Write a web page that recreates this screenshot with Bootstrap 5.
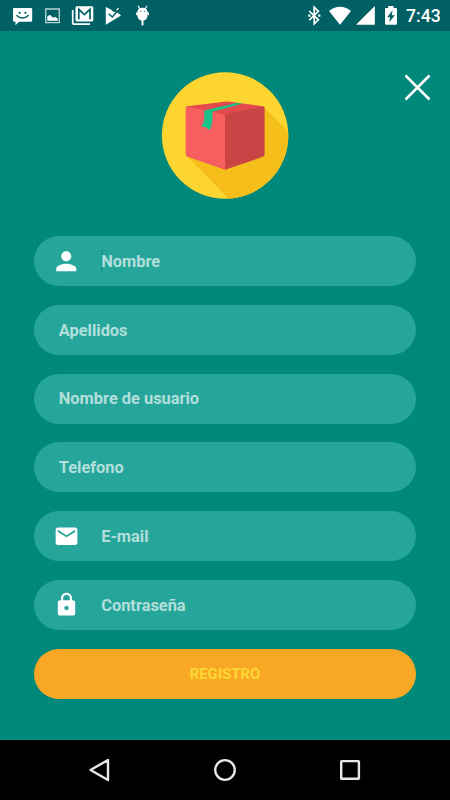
<!DOCTYPE html>
<html lang="es">
<head>
<meta charset="utf-8">
<meta name="viewport" content="width=device-width, initial-scale=1">
<title>Registro</title>
<link href="https://cdn.jsdelivr.net/npm/bootstrap@5.3.0/dist/css/bootstrap.min.css" rel="stylesheet">
<style>
body { font-family: Roboto, "Liberation Sans", sans-serif; background: #00897b; }
svg { display: block; flex: none; }
.screen { height: 800px; }
.status-bar { height: 31px; background: #006064; }
.clock { font-size: 17.6px; font-weight: 500; line-height: 31px; width: 46px; padding-left: 2px; padding-top: 1px; }
.hero { height: 205.2px; }
.logo { margin-top: 40px; }
.close-btn { position: absolute; right: 19px; top: 42px; }
.fields { padding: 0 33.8px; gap: 18.75px; }
.field { height: 50px; border-radius: 25px; background: #26a69a; padding-left: 20px; }
.field input { color: #b2dfdb; font-size: 16.4px; font-weight: 700; outline: 0; min-width: 0; padding: 2px 0 0 5px; height: 24px; }
.field input::placeholder { color: #b2dfdb; opacity: 1; }
.field svg + input { padding-left: 0; margin-left: 22.4px; }
.field .caret { background: linear-gradient(#16998b, #16998b) 0 1px / 2px 22px no-repeat; }
.field-submit { height: 50px; border-radius: 25px; background: #f9a825; color: #fdd835; font-size: 14.9px; font-weight: 700; }
.field-submit:hover { background: #f9a825; color: #fdd835; }
.nav-keys { height: 60px; background: #000; padding: 0 37.500px; }
</style>
<script src="https://cdn.jsdelivr.net/npm/bootstrap@5.3.0/dist/js/bootstrap.bundle.min.js"></script>
</head>
<body>
<div class="screen d-flex flex-column overflow-hidden">
  <header class="status-bar d-flex justify-content-between flex-shrink-0 text-white">
    <div class="d-flex ps-2">
      <svg width="30" height="31" viewBox="8 0 30 31"><path fill="#fff" d="M14 8H31Q32.200 8 32.200 9.200V20.500Q32.200 21.700 31 21.700H19L15.500 25.300V21.700H14.200Q13 21.700 13 20.500V9.200Q13 8 14 8Z"/><g fill="#006064"><circle cx="19.700" cy="12.800" r="1.100"/><circle cx="25.500" cy="12.800" r="1.100"/></g><path d="M16.300 15.300Q22.500 20.800 28.700 15.300" fill="none" stroke="#006064" stroke-width="1.500"/></svg>
      <svg width="30" height="31" viewBox="38 0 30 31"><path fill="none" stroke="#b9d3d4" stroke-width="1.300" d="M45.700 9H59.300V22.600H45.700Z"/><path fill="#fff" d="M47.300 20.700V16.500L50 14.800L53 17.800L55 16.800L57.800 18.800V20.700Z"/></svg>
      <svg width="30" height="31" viewBox="68 0 30 31"><path d="M72.700 10V22.500Q72.700 24.200 74.400 24.200H90" fill="none" stroke="#fff" stroke-width="1.700"/><rect x="75.500" y="6.200" width="17.800" height="15.300" rx="1.500" fill="#fff"/><path d="M78.800 19.300V9.300L84.400 14.500L90 9.300V19.300" fill="none" stroke="#006064" stroke-width="1.700"/></svg>
      <svg width="30" height="31" viewBox="98 0 30 31"><path fill="#fff" d="M105.800 7L111 9.600L113.500 12L116.500 11.800L121 15.500L105.800 24.700Z"/><path d="M108.700 13.800L112.300 17L118.800 9.600" fill="none" stroke="#006064" stroke-width="1.500"/><path d="M116.700 10L118.500 8.300" stroke="#fff" stroke-width="1.300"/></svg>
      <svg width="30" height="31" viewBox="128 0 30 31"><g stroke="#fff" fill="none" stroke-linecap="round"><path stroke-width="1.200" d="M138.200 6.200L140 9M146.800 6.200L145 9"/><path stroke-width="1.300" d="M136.700 12.800V14.500M148.300 12.800V14.500"/><path stroke-width="2" d="M142.500 20V24.500"/></g><path fill="#fff" d="M137.200 13Q137.500 7.800 142.500 7.800T147.800 13V14.500Q147.500 20.700 142.500 20.700T137.200 14.500Z"/><circle cx="140.600" cy="11.500" r=".6" fill="#006064"/><circle cx="144.400" cy="11.500" r=".6" fill="#006064"/></svg>
    </div>
    <div class="d-flex">
      <svg width="25" height="31" viewBox="300 0 25 31"><path d="M309.200 11L318.400 19.800L314.200 23.800V7.300L318.400 11.300L309.200 20.200" fill="none" stroke="#fff" stroke-width="1.700"/><path fill="#fff" d="M308.200 14.500h2.200v2.200h-2.200zM318.200 14.500h2.200v2.200h-2.200z"/></svg>
      <svg width="28" height="31" viewBox="325 0 28 31"><path fill="#fff" d="M329 11Q340 2.600 351 11L340 24.800Z"/></svg>
      <svg width="27" height="31" viewBox="353 0 27 31"><path fill="#fff" d="M374.800 6V24.800H356Z"/></svg>
      <svg width="24" height="31" viewBox="380 0 24 31"><path fill="#fff" d="M388.200 6H393.600V8H396Q397 8 397 9V23.800Q397 24.800 396 24.800H386Q385 24.800 385 23.800V9Q385 8 386 8H388.200Z"/><path fill="#006064" d="M392.600 10.300L387.200 17.300H390.100L389.200 22.300L394.900 15.300H391.700Z"/></svg>
      <div class="clock">7:43</div>
    </div>
  </header>

  <main class="flex-grow-1">
    <div class="hero position-relative d-flex justify-content-center align-items-start">
      <svg class="logo" width="130" height="130" viewBox="160 71 130 130" role="img" aria-label="Caja">
        <defs><clipPath id="disc"><circle cx="225.100" cy="135.500" r="63.200"/></clipPath></defs>
        <circle cx="225.100" cy="135.500" r="63.200" fill="#fdd531"/>
        <path clip-path="url(#disc)" fill="#f5be1b" d="M264 107.500L300 143.500V210H240L187 156.500Z"/>
        <path fill="#e34a4c" d="M186 107L187 106.200L224 101.800Q227 101.300 230 101.800L263 106.200L264.600 107.300L225 116Z"/>
        <path fill="#f65e60" d="M187.200 106.700L225 114.600V169.800L187.500 156.800Q185.600 156 185.600 154V108Q185.600 106.500 187.200 106.700Z"/>
        <path fill="#c94445" d="M225 114.600L262.800 106.700Q264.600 106.500 264.600 108V154Q264.600 156 262.800 156.800L225 169.800Z"/>
        <path fill="#17c48c" d="M204.300 110.500L236.500 102.900L242.700 103.500L212.500 111.800L212.300 121Q211.800 126.500 209.500 130.200L206.300 127.500L201.400 126.500Q204.500 122 204.500 117Z"/>
      </svg>
      <button type="button" class="close-btn btn p-0 border-0" aria-label="Cerrar">
        <svg width="28" height="28" viewBox="0 0 28 28"><path d="M2.500 2.500L26.500 26.500M26.500 2.500L2.500 26.500" stroke="#fff" stroke-width="2.500" fill="none"/></svg>
      </button>
    </div>

    <form class="fields d-flex flex-column">
      <div class="field d-flex align-items-center">
        <svg width="25" height="25" viewBox="2.200 2.200 20 20" fill="#fff"><path d="M12 12c2.210 0 4-1.790 4-4s-1.790-4-4-4-4 1.790-4 4 1.790 4 4 4zm0 2c-2.670 0-8 1.340-8 4v2h16v-2c0-2.660-5.330-4-8-4z"/></svg>
        <input class="caret flex-grow-1 border-0" type="text" placeholder="Nombre" aria-label="Nombre">
      </div>
      <div class="field d-flex align-items-center"><input class="flex-grow-1 border-0 bg-transparent" type="text" placeholder="Apellidos" aria-label="Apellidos"></div>
      <div class="field d-flex align-items-center"><input class="flex-grow-1 border-0 bg-transparent" type="text" placeholder="Nombre de usuario" aria-label="Nombre de usuario"></div>
      <div class="field d-flex align-items-center"><input class="flex-grow-1 border-0 bg-transparent" type="tel" placeholder="Telefono" aria-label="Telefono"></div>
      <div class="field d-flex align-items-center">
        <svg width="25" height="25" viewBox=".5 .7 23 23" fill="#fff"><path d="M20 4H4c-1.100 0-1.990.9-1.990 2L2 18c0 1.100.9 2 2 2h16c1.100 0 2-.9 2-2V6c0-1.100-.9-2-2-2zm0 4l-8 5-8-5V6l8 5 8-5v2z"/></svg>
        <input class="flex-grow-1 border-0 bg-transparent" type="email" placeholder="E-mail" aria-label="E-mail">
      </div>
      <div class="field d-flex align-items-center">
        <svg width="25" height="25" viewBox=".5 .3 23 23" fill="#fff"><path d="M18 8h-1V6c0-2.760-2.240-5-5-5S7 3.240 7 6v2H6c-1.100 0-2 .9-2 2v10c0 1.100.9 2 2 2h12c1.100 0 2-.9 2-2V10c0-1.100-.9-2-2-2zm-6 9c-1.100 0-2-.9-2-2s.9-2 2-2 2 .9 2 2-.9 2-2 2zm3.100-9H8.900V6c0-1.710 1.390-3.100 3.100-3.100s3.100 1.390 3.100 3.100v2z"/></svg>
        <input class="flex-grow-1 border-0 bg-transparent" type="text" placeholder="Contraseña" aria-label="Contraseña">
      </div>
      <button type="button" class="field-submit btn w-100 border-0 p-0">REGISTRO</button>
    </form>
  </main>

  <footer class="nav-keys d-flex align-items-center flex-shrink-0">
    <div class="flex-fill d-flex justify-content-center"><svg width="26" height="26" viewBox="0 0 26 26"><path d="M3.500 13L21 3V23Z" fill="none" stroke="#e8e8e8" stroke-width="2.400" stroke-linejoin="round"/></svg></div>
    <div class="flex-fill d-flex justify-content-center"><svg width="26" height="26" viewBox="0 0 26 26"><circle cx="13" cy="13" r="9.800" fill="none" stroke="#e8e8e8" stroke-width="2.300"/></svg></div>
    <div class="flex-fill d-flex justify-content-center"><svg width="26" height="26" viewBox="0 0 26 26"><rect x="4.200" y="4.100" width="17.700" height="17.700" rx=".6" fill="none" stroke="#e8e8e8" stroke-width="2.400"/></svg></div>
  </footer>
</div>
</body>
</html>
